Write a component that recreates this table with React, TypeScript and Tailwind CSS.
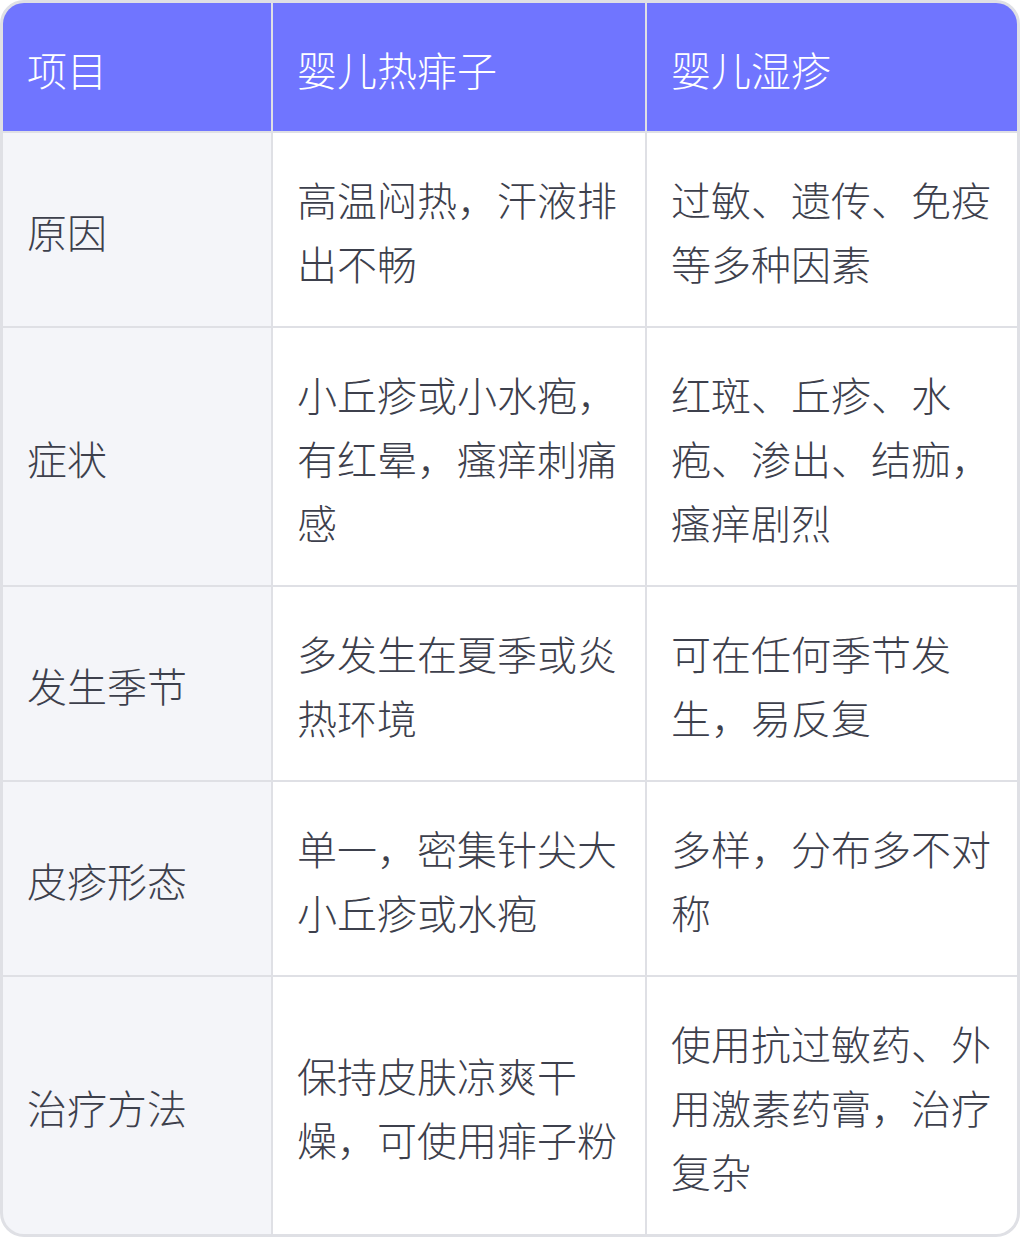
const headers = ['项目', '婴儿热痱子', '婴儿湿疹'];

const rows: [string, string, string][] = [
  ['原因', '高温闷热，汗液排出不畅', '过敏、遗传、免疫等多种因素'],
  ['症状', '小丘疹或小水疱，有红晕，瘙痒刺痛感', '红斑、丘疹、水疱、渗出、结痂，瘙痒剧烈'],
  ['发生季节', '多发生在夏季或炎热环境', '可在任何季节发生，易反复'],
  ['皮疹形态', '单一，密集针尖大小丘疹或水疱', '多样，分布多不对称'],
  ['治疗方法', '保持皮肤凉爽干燥，可使用痱子粉', '使用抗过敏药、外用激素药膏，治疗复杂'],
];

export default function App() {
  return (
    <div
      className="w-[1020px] h-[1239px] bg-white"
      style={{ fontFamily: '"Noto Sans CJK SC", "Noto Sans", sans-serif' }}
    >
      <div className="overflow-hidden rounded-3xl border-[3px] border-[#dfe0e5] bg-[#dfe0e5]">
        <div className="grid grid-cols-[268px_372px_1fr] gap-[2px] text-[40px] font-light leading-[64px]">
          {headers.map((h) => (
            <div key={h} className="bg-[#7075ff] px-6 pt-[34px] pb-[30px] text-white">
              {h}
            </div>
          ))}
          {rows.map((r) => (
            <>
              <div key={r[0]} className="flex items-center bg-[#f4f5f9] px-6 pt-[34px] pb-[31px] text-[#3d404c]">
                {r[0]}
              </div>
              <div className="flex items-center bg-white px-6 pt-[34px] pb-[31px] text-[#3d404c]">
                <span>{r[1]}</span>
              </div>
              <div className="flex items-center bg-white px-6 pt-[34px] pb-[31px] text-[#3d404c]">
                <span>{r[2]}</span>
              </div>
            </>
          ))}
        </div>
      </div>
    </div>
  );
}
